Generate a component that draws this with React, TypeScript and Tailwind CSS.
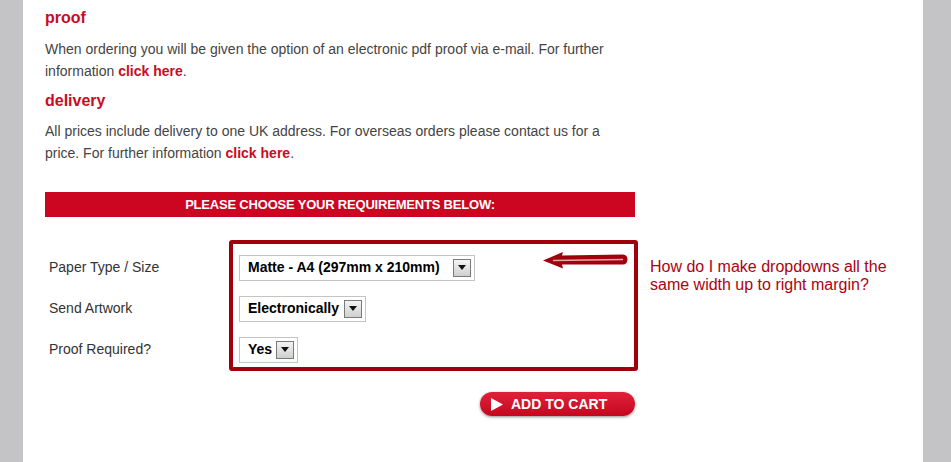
import React from "react";

function SelectBox({ value, width }: { value: string; width: string }) {
  return (
    <div className={`flex items-center justify-between h-[26px] border border-[#c4c4c4] bg-white pl-[8px] pr-[3px] ${width}`}>
      <span className="text-[14px] font-bold text-black whitespace-nowrap">{value}</span>
      <span className="ml-[4px] flex items-center justify-center w-[18px] h-[18px] border border-[#7a7a7a] bg-gradient-to-b from-[#f4f4f4] to-[#cfcfcf]">
        <svg width="8" height="5" viewBox="0 0 8 5">
          <path d="M0 0h8L4 5z" fill="#111" />
        </svg>
      </span>
    </div>
  );
}

function FormRow({ label, children }: { label: string; children: React.ReactNode }) {
  return (
    <div className="flex items-center h-[41px]">
      <div className="w-[194px] pl-[4px] text-[14px] text-[#333]">{label}</div>
      {children}
    </div>
  );
}

export default function App() {
  return (
    <div className="w-[951px] h-[462px] bg-[#c4c4c6] font-['Liberation_Sans',Arial,sans-serif] overflow-hidden">
      <div className="ml-[23px] w-[900px] h-[462px] bg-white pl-[22px] pt-[7px]">
        <div className="w-[590px]">
          <h2 className="text-[16px] font-bold text-[#cc0a24] leading-[22px]">proof</h2>
          <p className="mt-[9px] text-[14px] leading-[22px] text-[#444]">
            When ordering you will be given the option of an electronic pdf proof via e-mail. For further information{" "}
            <a className="font-bold text-[#cc0a24]">click here</a>.
          </p>
          <h2 className="mt-[8px] text-[16px] font-bold text-[#cc0a24] leading-[22px]">delivery</h2>
          <p className="mt-[8px] text-[14px] leading-[22px] text-[#444]">
            All prices include delivery to one UK address. For overseas orders please contact us for a price. For further information{" "}
            <a className="font-bold text-[#cc0a24]">click here</a>.
          </p>

          <div className="mt-[28px] h-[25px] bg-[#cc0520] flex items-center justify-center">
            <span className="text-white font-bold text-[13px] tracking-[-0.2px] font-['Liberation_Sans_Narrow','Liberation_Sans',Arial,sans-serif] [font-stretch:condensed]">
              PLEASE CHOOSE YOUR REQUIREMENTS BELOW:
            </span>
          </div>

          <div className="relative mt-[30px]">
            <FormRow label="Paper Type / Size">
              <SelectBox value="Matte - A4 (297mm x 210mm)" width="w-[236px]" />
            </FormRow>
            <FormRow label="Send Artwork">
              <SelectBox value="Electronically" width="w-[127px]" />
            </FormRow>
            <FormRow label="Proof Required?">
              <SelectBox value="Yes" width="w-[59px]" />
            </FormRow>

            <div className="absolute left-[184px] top-[-7px] w-[409px] h-[131px] border-[4px] border-[#a0000c] rounded-[3px] pointer-events-none" />
            <svg className="absolute left-[497px] top-[4px]" width="86" height="18" viewBox="0 0 86 18">
              <path d="M1 9.5 L21 1 L20 4.5 L81 3.5 Q85.5 4 85.5 8.5 Q85 13.5 81 13.5 L20 13.5 L21 17.5 Z" fill="#a0000c" />
              <path d="M11 9.5 L81 8.5" stroke="#e4a7ab" strokeWidth="1.4" />
            </svg>
            <div className="absolute left-[605px] top-[11px] w-[258px] text-[16px] leading-[18px] text-[#b00010]">
              How do I make dropdowns all the same width up to right margin?
            </div>
          </div>

          <div className="mt-[22px] flex justify-end">
            <button className="flex items-center h-[24px] w-[155px] rounded-[12px] bg-gradient-to-b from-[#e0203a] to-[#c4061e] shadow-[0_1px_3px_rgba(0,0,0,0.45)] pl-[11px]">
              <svg width="12" height="13" viewBox="0 0 12 13">
                <path d="M0 0L12 6.5L0 13z" fill="#fff" />
              </svg>
              <span className="ml-[8px] text-white font-bold text-[14px] leading-none">ADD TO CART</span>
            </button>
          </div>
        </div>
      </div>
    </div>
  );
}
